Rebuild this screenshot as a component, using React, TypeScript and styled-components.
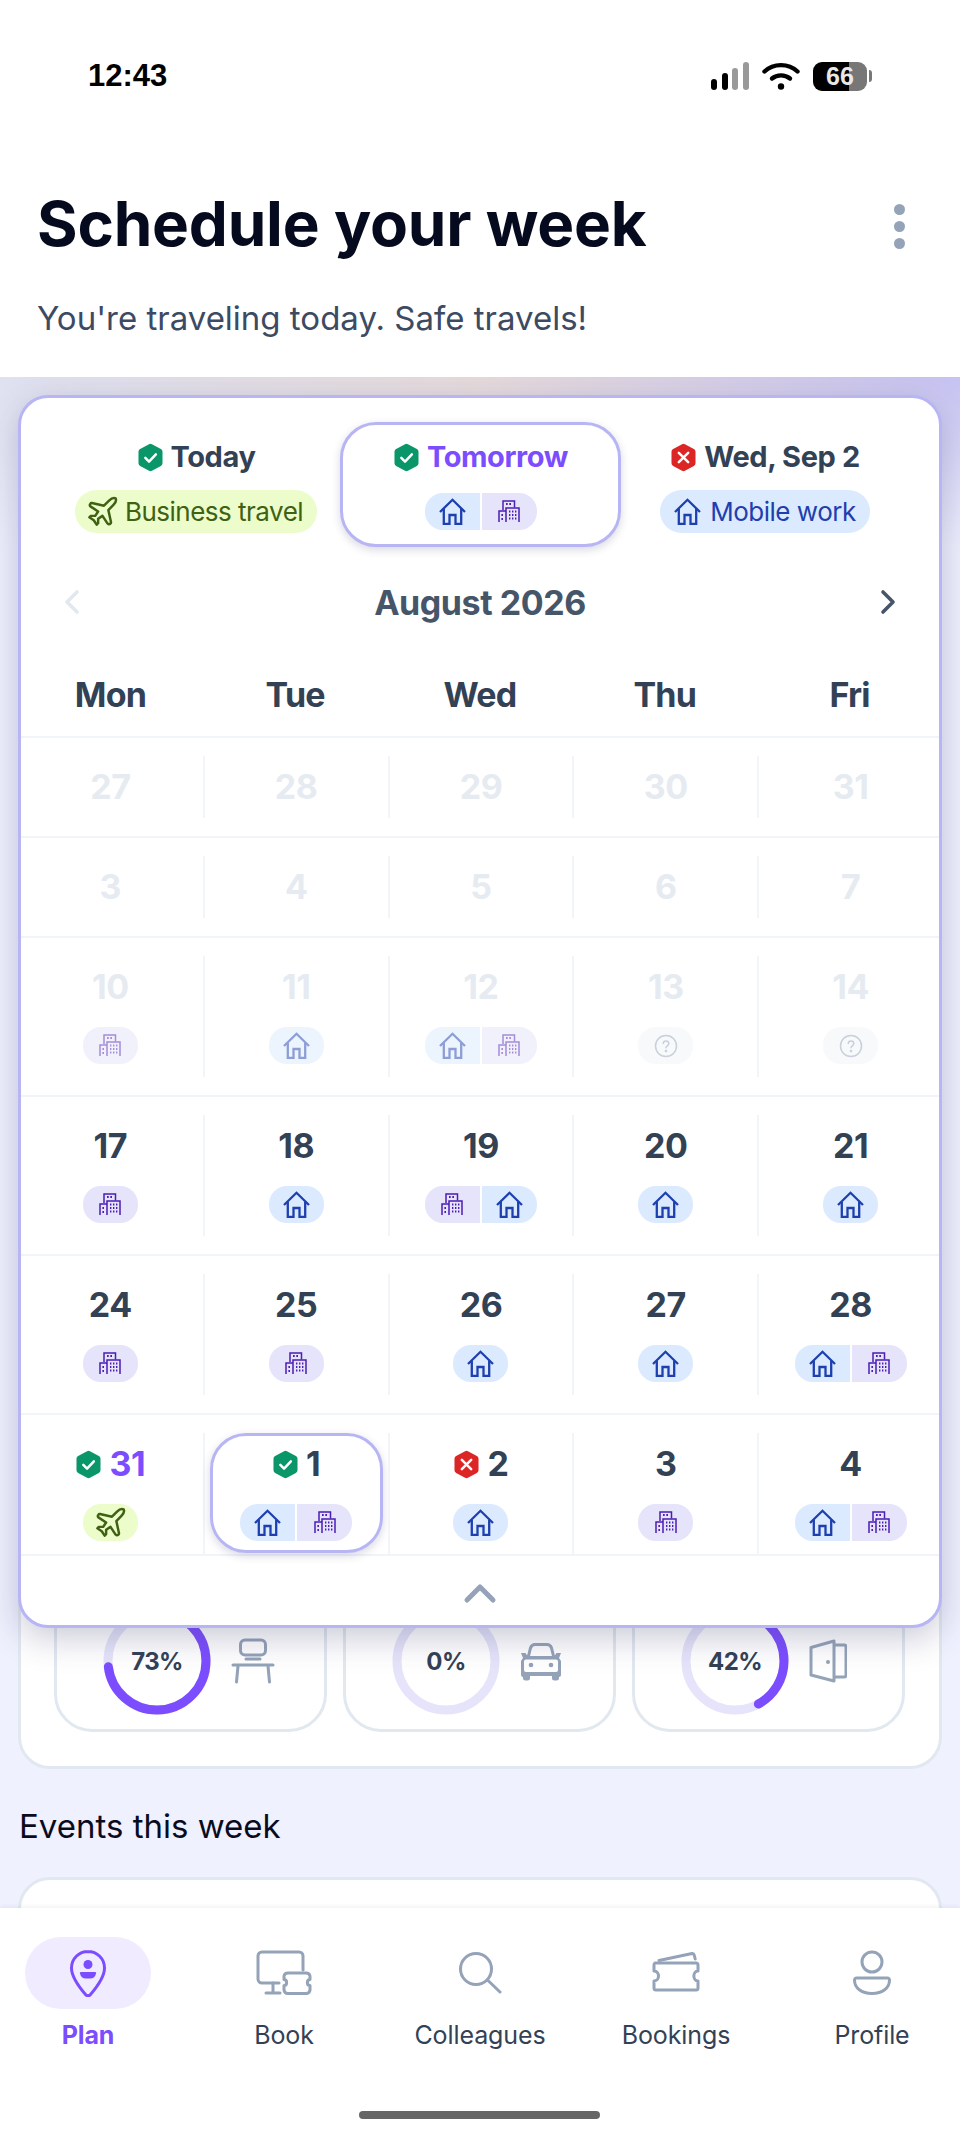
import React from 'react';
import styled, { createGlobalStyle } from 'styled-components';
import { Plane } from 'lucide-react';

type Mode = 'home' | 'office' | 'travel' | 'unknown';
type Status = 'ok' | 'bad';

interface Day {
  label: string;
  modes?: Mode[];
  status?: Status;
  accent?: boolean;
  selected?: boolean;
}

const rows: { days: Day[]; dim?: boolean }[] = [
  { dim: true, days: [{ label: '27' }, { label: '28' }, { label: '29' }, { label: '30' }, { label: '31' }] },
  { dim: true, days: [{ label: '3' }, { label: '4' }, { label: '5' }, { label: '6' }, { label: '7' }] },
  {
    dim: true,
    days: [
      { label: '10', modes: ['office'] },
      { label: '11', modes: ['home'] },
      { label: '12', modes: ['home', 'office'] },
      { label: '13', modes: ['unknown'] },
      { label: '14', modes: ['unknown'] },
    ],
  },
  {
    days: [
      { label: '17', modes: ['office'] },
      { label: '18', modes: ['home'] },
      { label: '19', modes: ['office', 'home'] },
      { label: '20', modes: ['home'] },
      { label: '21', modes: ['home'] },
    ],
  },
  {
    days: [
      { label: '24', modes: ['office'] },
      { label: '25', modes: ['office'] },
      { label: '26', modes: ['home'] },
      { label: '27', modes: ['home'] },
      { label: '28', modes: ['home', 'office'] },
    ],
  },
  {
    days: [
      { label: '31', modes: ['travel'], status: 'ok', accent: true },
      { label: '1', modes: ['home', 'office'], status: 'ok', selected: true },
      { label: '2', modes: ['home'], status: 'bad' },
      { label: '3', modes: ['office'] },
      { label: '4', modes: ['home', 'office'] },
    ],
  },
];

const HomeIcon = () => (
  <svg width="27" height="27" viewBox="0 0 27 27" fill="none" stroke="#1e40af" strokeWidth="2.3">
    <path d="M1 14 13.500 1.800 26 14" />
    <path d="M4.800 11v15h5.700v-9h6v9h5.700V11" />
  </svg>
);

const OfficeIcon = () => (
  <svg width="22" height="23" viewBox="0 0 22 23" fill="none" stroke="#4c1db5" strokeWidth="1.5">
    <path d="M5 10V1h11.500v6.500" />
    <path d="M1 22V11h7" />
    <path d="M8 22V8h13v14" />
    <path
      d="M8 4h1.700M11.300 4H13M3.400 15h1.600M3.400 19h1.600M11 11.500h1.400M14 11.500h1.400M17 11.500h1.400M11 15h1.400M14 15h1.400M17 15h1.400M11 18.500h1.400M14 18.500h1.400M17 18.500h1.400"
      strokeWidth="1.800"
    />
  </svg>
);

const QuestionIcon = () => (
  <svg width="24" height="24" viewBox="0 0 24 24" fill="none" stroke="#94a3b8" strokeWidth="1.500">
    <circle cx="12" cy="12" r="10.500" />
    <path d="M9.300 9.500c0-3.400 5.500-3.400 5.500 0 0 2.300-2.800 2.300-2.800 4.300" strokeLinecap="round" />
    <circle cx="12" cy="17" r=".6" />
  </svg>
);

const StatusIcon = ({ status }: { status: Status }) => (
  <svg width="27" height="29" viewBox="0 0 26 28">
    <path
      d="M11.600 1.200a3 3 0 0 1 2.800 0l8.600 4.600a3 3 0 0 1 1.600 2.600v11.200a3 3 0 0 1-1.600 2.600l-8.600 4.600a3 3 0 0 1-2.800 0L3 22.200a3 3 0 0 1-1.600-2.600V8.400A3 3 0 0 1 3 5.800z"
      fill={status === 'ok' ? '#0a9668' : '#dc2626'}
    />
    {status === 'ok' ? (
      <path d="m8 14.400 3.600 3.600 6.600-7" fill="none" stroke="#fff" strokeWidth="2.400" strokeLinecap="round" strokeLinejoin="round" />
    ) : (
      <path d="m8.500 9.500 9 9m0-9-9 9" fill="none" stroke="#fff" strokeWidth="2.400" strokeLinecap="round" />
    )}
  </svg>
);

const ChevronLeft = ({ color }: { color: string }) => (
  <svg width="18" height="26" viewBox="0 0 18 26" fill="none" stroke={color} strokeWidth="3.600" strokeLinecap="round" strokeLinejoin="round">
    <path d="M14 3 4 13l10 10" />
  </svg>
);

const ChevronRight = ({ color }: { color: string }) => (
  <svg width="18" height="26" viewBox="0 0 18 26" fill="none" stroke={color} strokeWidth="3.600" strokeLinecap="round" strokeLinejoin="round">
    <path d="m4 3 10 10L4 23" />
  </svg>
);

const SignalIcon = () => (
  <svg width="38" height="28" viewBox="0 0 38 28">
    <rect x="0" y="17" width="6" height="11" rx="3" fill="#000" />
    <rect x="11" y="11" width="6" height="17" rx="3" fill="#000" />
    <rect x="21" y="6" width="6" height="22" rx="3" fill="#999" />
    <rect x="32" y="0" width="6" height="28" rx="3" fill="#999" />
  </svg>
);

const WifiIcon = () => (
  <svg width="38" height="28" viewBox="0 0 38 28" fill="none" stroke="#000" strokeWidth="4.400" strokeLinecap="round">
    <path d="M2.500 9.500c9-8.500 24-8.500 33 0" />
    <path d="M10 16.500c5-4.200 13-4.200 18 0" />
    <circle cx="19" cy="24.500" r="3.200" fill="#000" stroke="none" />
  </svg>
);

const DeskIcon = () => (
  <svg width="44" height="46" viewBox="0 0 44 46" fill="none" stroke="#94a3b8" strokeWidth="3" strokeLinecap="round" strokeLinejoin="round">
    <rect x="9.500" y="2" width="25" height="15" rx="4.500" />
    <path d="M15 21h14" />
    <path d="M2 27h40" />
    <path d="M7 28 5.500 44M37 28l1.500 16" />
  </svg>
);

const CarIcon = () => (
  <svg width="42" height="40" viewBox="0 0 42 40" fill="none">
    <path d="M8 17 10.500 7a5 5 0 0 1 5-3.500h11a5 5 0 0 1 5 3.500l2.500 10" stroke="#94a3b8" strokeWidth="3" />
    <path
      d="M1 12h4.500l2 3h27l2-3H41l-2 5 2 3v14a2 2 0 0 1-2 2h0v1a2.500 2.500 0 0 1-2.500 2.500h-2A2.500 2.500 0 0 1 32 37v-2H10v2a2.500 2.500 0 0 1-2.500 2.500h-2A2.500 2.500 0 0 1 3 37v-1a2 2 0 0 1-2-2V20l2-3z"
      fill="#94a3b8"
    />
    <rect x="4" y="18.500" width="34" height="12.500" rx="2" fill="#fff" />
    <circle cx="11" cy="24" r="2.300" fill="#94a3b8" />
    <circle cx="31" cy="24" r="2.300" fill="#94a3b8" />
  </svg>
);

const DoorIcon = () => (
  <svg width="38" height="44" viewBox="0 0 38 44" fill="none" stroke="#94a3b8" strokeWidth="3" strokeLinejoin="round">
    <path d="M2 8.500 25 2v40L2 36z" />
    <path d="M25 6h10a2 2 0 0 1 2 2v28a2 2 0 0 1-2 2H25" />
    <circle cx="19" cy="23" r="2" fill="#94a3b8" stroke="none" />
  </svg>
);

const PlanIcon = () => (
  <svg width="38" height="48" viewBox="0 0 38 48" fill="none">
    <path
      d="M19 2.500C9.900 2.500 2.500 9.700 2.500 19c0 8 8 19.500 14 26.500a3.200 3.200 0 0 0 5 0c6-7 14-18.500 14-26.500C35.500 9.700 28.100 2.500 19 2.500z"
      stroke="#7c4dff"
      strokeWidth="3"
    />
    <circle cx="19" cy="15.500" r="4.500" fill="#7c4dff" />
    <path d="M12 23h14a1 1 0 0 1 1 1.500c-.5 3-2.500 5-6 5h-4c-3.500 0-5.500-2-6-5a1 1 0 0 1 1-1.500z" fill="#7c4dff" />
  </svg>
);

const BookIcon = () => (
  <svg width="56" height="46" viewBox="0 0 56 46" fill="none" stroke="#94a3b8" strokeWidth="3" strokeLinecap="round" strokeLinejoin="round">
    <path d="M23 33H6a4 4 0 0 1-4-4V6a4 4 0 0 1 4-4h37a4 4 0 0 1 4 4v14" />
    <path d="M17 33v10M10 43h14" />
    <path d="M32 23h18a4 4 0 0 1 4 3v3.500c-3.500 0-3.500 6 0 6V40a4 4 0 0 1-4 3.500H32a4 4 0 0 1-4-3.500v-4.500c3.500 0 3.500-6 0-6V26a4 4 0 0 1 4-3z" />
  </svg>
);

const SearchIcon = () => (
  <svg width="44" height="44" viewBox="0 0 44 44" fill="none" stroke="#94a3b8" strokeWidth="3" strokeLinecap="round">
    <circle cx="18" cy="18" r="15.500" />
    <path d="m29.500 29 12.500 12" />
  </svg>
);

const TicketIcon = () => (
  <svg width="50" height="44" viewBox="0 0 50 44" fill="none" stroke="#94a3b8" strokeWidth="3" strokeLinecap="round" strokeLinejoin="round">
    <path d="M8 9.500 41 2.500a2 2 0 0 1 2.200 1.500l1 4" />
    <path d="M4 12h41a2 2 0 0 1 2 2v6c-5.500 0-5.500 10 0 10v7a2 2 0 0 1-2 2H5a2 2 0 0 1-2-2v-7c6 0 6-10 0-10v-6a2 2 0 0 1 1-2z" />
  </svg>
);

const ProfileIcon = () => (
  <svg width="38" height="46" viewBox="0 0 38 46" fill="none" stroke="#94a3b8" strokeWidth="3">
    <circle cx="19" cy="12" r="10" />
    <path d="M4 28h30a2 2 0 0 1 2.500 2c0 8-7 13.500-17.500 13.500S1.500 38 1.500 30A2 2 0 0 1 4 28z" />
  </svg>
);

const Ring = ({ value }: { value: number }) => {
  const length = 2 * Math.PI * 49;
  return (
    <RingBox>
      <svg width="108" height="108" viewBox="0 0 108 108" fill="none">
        <circle cx="54" cy="54" r="49" stroke="#e5e4fa" strokeWidth="9" />
        {value > 0 && (
          <circle
            cx="54"
            cy="54"
            r="49"
            stroke="#7c4dff"
            strokeWidth="9"
            strokeLinecap="round"
            strokeDasharray={`${(length * value) / 100} ${length}`}
            transform="rotate(-90 54 54)"
          />
        )}
      </svg>
      <RingLabel>{value}%</RingLabel>
    </RingBox>
  );
};

const ModeIcon = ({ mode }: { mode: Mode }) => {
  if (mode === 'home') return <HomeIcon />;
  if (mode === 'office') return <OfficeIcon />;
  if (mode === 'travel') return <Plane size={35} color="#3f6212" strokeWidth={1.7} />;
  return <QuestionIcon />;
};

const ModePill = ({ modes }: { modes: Mode[] }) => (
  <PillGroup>
    {modes.map((mode, i) => (
      <PillPart key={i} $mode={mode}>
        <ModeIcon mode={mode} />
      </PillPart>
    ))}
  </PillGroup>
);

export default function App() {
  return (
    <Page>
      <GlobalStyle />
      <Header>
        <StatusBar>
          <Clock>12:43</Clock>
          <StatusIcons>
            <SignalIcon />
            <WifiIcon />
            <Battery>
              <BatteryBody>66</BatteryBody>
              <BatteryNub />
            </Battery>
          </StatusIcons>
        </StatusBar>
        <TitleRow>
          <Title>Schedule your week</Title>
          <MoreButton>
            <Dot />
            <Dot />
            <Dot />
          </MoreButton>
        </TitleRow>
        <Subtitle>You're traveling today. Safe travels!</Subtitle>
      </Header>

      <Main>
        <CalendarCard>
          <Tabs>
            <Tab>
              <TabTitle>
                <StatusIcon status="ok" />
                Today
              </TabTitle>
              <LabelPill $tone="travel">
                <Plane size={35} color="#3f6212" strokeWidth={1.7} />
                Business travel
              </LabelPill>
            </Tab>
            <Tab $selected>
              <TabTitle $accent>
                <StatusIcon status="ok" />
                Tomorrow
              </TabTitle>
              <ModePill modes={['home', 'office']} />
            </Tab>
            <Tab>
              <TabTitle>
                <StatusIcon status="bad" />
                Wed, Sep 2
              </TabTitle>
              <LabelPill $tone="home">
                <HomeIcon />
                Mobile work
              </LabelPill>
            </Tab>
          </Tabs>

          <MonthRow>
            <ChevronLeft color="#e2e8f0" />
            <Month>August 2026</Month>
            <ChevronRight color="#475569" />
          </MonthRow>

          <Weekdays>
            {['Mon', 'Tue', 'Wed', 'Thu', 'Fri'].map((name) => (
              <Weekday key={name}>{name}</Weekday>
            ))}
          </Weekdays>

          {rows.map((row, r) => (
            <WeekRow key={r} $last={r === rows.length - 1}>
              {row.days.map((day, d) => (
                <DayCell key={d} $first={d === 0}>
                  <DayInner $selected={day.selected} $dim={row.dim}>
                    <DayNumber $dim={row.dim} $accent={day.accent}>
                      {day.status && <StatusIcon status={day.status} />}
                      {day.label}
                    </DayNumber>
                    {day.modes && <ModePill modes={day.modes} />}
                  </DayInner>
                </DayCell>
              ))}
            </WeekRow>
          ))}

          <CollapseRow>
            <svg width="38" height="24" viewBox="0 0 38 24" fill="none" stroke="#94a3b8" strokeWidth="5" strokeLinecap="round" strokeLinejoin="round">
              <path d="M6 20 19 7l13 13" />
            </svg>
          </CollapseRow>
        </CalendarCard>

        <StatsCard>
          <StatTile>
            <Ring value={73} />
            <DeskIcon />
          </StatTile>
          <StatTile>
            <Ring value={0} />
            <CarIcon />
          </StatTile>
          <StatTile>
            <Ring value={42} />
            <DoorIcon />
          </StatTile>
        </StatsCard>

        <SectionTitle>Events this week</SectionTitle>
        <EventsCard />
      </Main>

      <Nav>
        <NavItem>
          <NavIconBox $active>
            <PlanIcon />
          </NavIconBox>
          <NavLabel $active>Plan</NavLabel>
        </NavItem>
        <NavItem>
          <NavIconBox>
            <BookIcon />
          </NavIconBox>
          <NavLabel>Book</NavLabel>
        </NavItem>
        <NavItem>
          <NavIconBox>
            <SearchIcon />
          </NavIconBox>
          <NavLabel>Colleagues</NavLabel>
        </NavItem>
        <NavItem>
          <NavIconBox>
            <TicketIcon />
          </NavIconBox>
          <NavLabel>Bookings</NavLabel>
        </NavItem>
        <NavItem>
          <NavIconBox>
            <ProfileIcon />
          </NavIconBox>
          <NavLabel>Profile</NavLabel>
        </NavItem>
        <HomeBar />
      </Nav>
    </Page>
  );
}

const GlobalStyle = createGlobalStyle`
  html, body {
    margin: 0;
    padding: 0;
    background: #fff;
  }
  * {
    box-sizing: border-box;
  }
`;

const Page = styled.div`
  width: 960px;
  height: 2142px;
  display: flex;
  flex-direction: column;
  overflow: hidden;
  font-family: Inter, "Liberation Sans", sans-serif;
`;

const Header = styled.header`
  height: 377px;
  flex: none;
  padding: 0 37px;
  background: #fff;
`;

const StatusBar = styled.div`
  height: 100px;
  padding: 59px 88px 0 88px;
  margin: 0 -37px;
  display: flex;
  justify-content: space-between;
`;

const Clock = styled.div`
  font-family: "Liberation Sans", Arial, sans-serif;
  font-size: 31px;
  line-height: 34px;
  font-weight: 700;
  color: #000;
`;

const StatusIcons = styled.div`
  display: flex;
  align-items: center;
  gap: 13px;
  height: 34px;
`;

const Battery = styled.div`
  display: flex;
  align-items: center;
  gap: 2px;
`;

const BatteryBody = styled.div`
  width: 54px;
  height: 29px;
  border-radius: 9px;
  background: linear-gradient(90deg, #000 0 36px, #777 36px);
  color: #e8e8e8;
  font-family: "Liberation Sans", Arial, sans-serif;
  font-size: 25px;
  line-height: 29px;
  font-weight: 700;
  text-align: center;
`;

const BatteryNub = styled.div`
  width: 3px;
  height: 12px;
  border-radius: 0 3px 3px 0;
  background: #777;
`;

const TitleRow = styled.div`
  display: flex;
  justify-content: space-between;
  align-items: center;
  margin-top: 90px;
  height: 72px;
`;

const Title = styled.h1`
  margin: 0 0 5px;
  font-size: 62px;
  line-height: 72px;
  font-weight: 700;
  letter-spacing: -0.2px;
  color: #050a1e;
`;

const MoreButton = styled.div`
  display: flex;
  flex-direction: column;
  gap: 6px;
  margin-right: 18px;
`;

const Dot = styled.span`
  width: 11px;
  height: 11px;
  border-radius: 50%;
  background: #94a3b8;
`;

const Subtitle = styled.p`
  margin: 35px 0 0;
  font-size: 33px;
  line-height: 42px;
  font-weight: 400;
  color: #3c4a63;
`;

const Main = styled.main`
  flex: 1;
  min-height: 0;
  overflow: hidden;
  padding: 18px 18px 0;
  background:
    linear-gradient(180deg, rgba(239, 241, 254, 0), #eff1fe) top / 100% 170px no-repeat,
    linear-gradient(90deg, #dfe1f0 0%, #e6dada 50%, #c6c2f2 100%) top / 100% 170px no-repeat,
    #eff1fe;
`;

const CalendarCard = styled.section`
  position: relative;
  z-index: 2;
  height: 1233px;
  border: 3px solid #b8b5f5;
  border-radius: 30px;
  background: #fff;
  overflow: hidden;
  box-shadow: 0 10px 34px rgba(60, 60, 110, 0.28);
`;

const Tabs = styled.div`
  display: grid;
  grid-template-columns: 248px 281px 248px;
  gap: 20px;
  padding: 24px 0 0 51px;
`;

const Tab = styled.div<{ $selected?: boolean }>`
  height: 125px;
  display: flex;
  flex-direction: column;
  align-items: center;
  gap: ${(p) => (p.$selected ? '21px' : '18px')};
  padding-top: 17px;
  border-radius: 36px;
  border: 3px solid ${(p) => (p.$selected ? '#b8b5f5' : 'transparent')};
  background: #fff;
  box-shadow: ${(p) => (p.$selected ? '0 3px 8px rgba(60, 60, 110, 0.2)' : 'none')};
`;

const TabTitle = styled.div<{ $accent?: boolean }>`
  display: flex;
  align-items: center;
  gap: 7px;
  height: 30px;
  font-size: 29px;
  line-height: 30px;
  font-weight: 700;
  letter-spacing: -0.4px;
  white-space: nowrap;
  color: ${(p) => (p.$accent ? '#7c4dff' : '#334155')};
`;

const LabelPill = styled.div<{ $tone: 'travel' | 'home' }>`
  flex: none;
  display: flex;
  align-items: center;
  gap: ${(p) => (p.$tone === 'travel' ? '5px' : '9px')};
  height: 43px;
  padding: ${(p) => (p.$tone === 'travel' ? '0 14px 0 10px' : '0 14px')};
  border-radius: 22px;
  font-size: 26px;
  font-weight: 400;
  letter-spacing: -0.5px;
  white-space: nowrap;
  background: ${(p) => (p.$tone === 'travel' ? '#ecfccb' : '#dbeafe')};
  color: ${(p) => (p.$tone === 'travel' ? '#3f6212' : '#1e40af')};
`;

const PillGroup = styled.div`
  display: flex;
  gap: 2px;
  height: 37px;
`;

const PillPart = styled.div<{ $mode: Mode }>`
  width: 55px;
  height: 37px;
  display: flex;
  align-items: center;
  justify-content: center;
  background: ${(p) =>
    p.$mode === 'home'
      ? '#dbeafe'
      : p.$mode === 'office'
        ? '#e5e4fa'
        : p.$mode === 'travel'
          ? '#ecfccb'
          : '#f1f5f9'};

  &:first-child {
    border-radius: 18px 0 0 18px;
  }
  &:last-child {
    border-top-right-radius: 18px;
    border-bottom-right-radius: 18px;
  }
  &:only-child {
    border-radius: 18px;
  }
`;

const MonthRow = styled.div`
  display: flex;
  align-items: center;
  justify-content: space-between;
  height: 68px;
  margin-top: 21px;
  padding: 0 42px;
`;

const Month = styled.div`
  font-size: 34px;
  font-weight: 700;
  letter-spacing: -0.45px;
  color: #475569;
`;

const Weekdays = styled.div`
  display: grid;
  grid-template-columns: repeat(5, 1fr);
  margin: 36px -3px 0;
  height: 64px;
`;

const Weekday = styled.div`
  text-align: center;
  font-size: 34px;
  line-height: 46px;
  font-weight: 700;
  letter-spacing: -0.8px;
  color: #334155;
`;

const WeekRow = styled.div<{ $last?: boolean }>`
  display: grid;
  grid-template-columns: repeat(5, 1fr);
  margin: 0 -3px;
  padding: ${(p) => (p.$last ? '18px 0 0' : '18px 0')};
  border-top: 2px solid #f1f5f9;
`;

const DayCell = styled.div<{ $first?: boolean }>`
  padding: 0 5px;
  border-left: ${(p) => (p.$first ? 'none' : '2px solid #f1f5f9')};
  display: flex;
`;

const DayInner = styled.div<{ $selected?: boolean; $dim?: boolean }>`
  flex: 1;
  display: flex;
  flex-direction: column;
  align-items: center;
  gap: 22px;
  padding: 10px 0;
  border-radius: 36px;
  border: 3px solid ${(p) => (p.$selected ? '#b8b5f5' : 'transparent')};
  box-shadow: ${(p) => (p.$selected ? '0 3px 8px rgba(60, 60, 110, 0.2)' : 'none')};
  margin-bottom: ${(p) => (p.$selected ? '1px' : '0')};
  padding-bottom: ${(p) => (p.$selected ? '9px' : '10px')};

  & > div:last-child:not(:first-child) {
    opacity: ${(p) => (p.$dim ? 0.5 : 1)};
  }
`;

const DayNumber = styled.div<{ $dim?: boolean; $accent?: boolean }>`
  display: flex;
  align-items: center;
  gap: 7px;
  height: 36px;
  font-size: 34px;
  line-height: 36px;
  font-weight: 700;
  letter-spacing: -0.4px;
  color: ${(p) => (p.$dim ? '#e6ebf1' : p.$accent ? '#7c4dff' : '#334155')};
`;

const CollapseRow = styled.div`
  height: 70px;
  margin: 0 -3px;
  padding-top: 3px;
  border-top: 2px solid #f1f5f9;
  display: flex;
  align-items: center;
  justify-content: center;
`;

const StatsCard = styled.section`
  position: relative;
  z-index: 1;
  margin-top: -71px;
  height: 212px;
  padding: 30px 33px 34px;
  display: grid;
  grid-template-columns: repeat(3, 273px);
  gap: 16px;
  background: #fff;
  border: 3px solid #e2e8f0;
  border-radius: 32px;
`;

const StatTile = styled.div`
  display: flex;
  align-items: center;
  gap: 20px;
  padding-left: 46px;
  border: 3px solid #e2e8f0;
  border-radius: 38px;
`;

const RingBox = styled.div`
  position: relative;
  flex: none;
  width: 108px;
  height: 108px;
`;

const RingLabel = styled.div`
  position: absolute;
  inset: 0;
  display: flex;
  align-items: center;
  justify-content: center;
  font-size: 24px;
  font-weight: 700;
  letter-spacing: -0.6px;
  color: #334155;
`;

const SectionTitle = styled.h2`
  margin: 35px 0 0 1px;
  font-size: 33px;
  line-height: 44px;
  font-weight: 400;
  color: #0a0c1e;
`;

const EventsCard = styled.div`
  margin-top: 29px;
  height: 120px;
  background: #fff;
  border: 3px solid #e2e8f0;
  border-radius: 32px;
`;

const Nav = styled.nav`
  position: relative;
  flex: none;
  height: 234px;
  padding: 29px 25px 0;
  display: flex;
  justify-content: space-between;
  align-items: flex-start;
  background: #fff;
  box-shadow: 0 -2px 4px rgba(15, 23, 42, 0.05);
`;

const NavItem = styled.div`
  width: 126px;
  display: flex;
  flex-direction: column;
  align-items: center;
`;

const NavIconBox = styled.div<{ $active?: boolean }>`
  width: 126px;
  height: 72px;
  display: flex;
  align-items: center;
  justify-content: center;
  border-radius: 36px;
  background: ${(p) => (p.$active ? '#f0ebff' : 'transparent')};
`;

const NavLabel = styled.div<{ $active?: boolean }>`
  margin-top: 11px;
  font-size: 25px;
  line-height: 30px;
  white-space: nowrap;
  font-weight: ${(p) => (p.$active ? 700 : 400)};
  letter-spacing: -0.1px;
  color: ${(p) => (p.$active ? '#7c4dff' : '#334155')};
`;

const HomeBar = styled.div`
  position: absolute;
  left: 359px;
  top: 203px;
  width: 241px;
  height: 8px;
  border-radius: 4px;
  background: #666;
`;
